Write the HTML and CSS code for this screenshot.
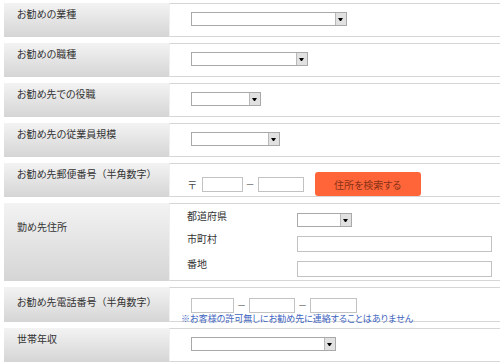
FILE: index.html
```html
<!DOCTYPE html>
<html lang="ja">
<head>
  <meta charset="UTF-8" />
  <meta name="viewport" content="width=device-width, initial-scale=1" />
  <title>お勤め先情報</title>
  <link rel="stylesheet" href="styles.css">
</head>
<body>

<form class="form">
  <div class="row">
    <div class="label">お勧めの業種</div>
    <div class="value">
      <span class="select sel-industry"><select name="industry"></select></span>
    </div>
  </div>

  <div class="row">
    <div class="label">お勧めの職種</div>
    <div class="value">
      <span class="select sel-job"><select name="job"></select></span>
    </div>
  </div>

  <div class="row">
    <div class="label">お勧め先での役職</div>
    <div class="value">
      <span class="select sel-post"><select name="post"></select></span>
    </div>
  </div>

  <div class="row">
    <div class="label">お勧め先の従業員規模</div>
    <div class="value">
      <span class="select sel-size"><select name="size"></select></span>
    </div>
  </div>

  <div class="row">
    <div class="label">お勧め先郵便番号<span class="paren">（半角数字）</span></div>
    <div class="value postal">
      <span class="mark">〒</span>
      <input type="text" class="zip1" />
      <span class="sep">－</span>
      <input type="text" class="zip2" />
      <button type="button" class="search-btn">住所を検索する</button>
    </div>
  </div>

  <div class="row address-row">
    <div class="label label-address">勤め先住所</div>
    <div class="value address">
      <span class="sub-label">都道府県</span>
      <span class="select sel-pref"><select name="pref"></select></span>
      <span class="sub-label">市町村</span>
      <input type="text" class="wide" />
      <span class="sub-label">番地</span>
      <input type="text" class="wide" />
    </div>
  </div>

  <div class="row">
    <div class="label label-tel">お勧め先電話番号<span class="paren">（半角数字）</span></div>
    <div class="value tel">
      <div class="tel-line">
        <input type="text" class="tel1" />
        <span class="sep">－</span>
        <input type="text" class="tel2" />
        <span class="sep">－</span>
        <input type="text" class="tel3" />
      </div>
      <p class="note">※お客様の許可無しにお勧め先に連絡することはありません</p>
    </div>
  </div>

  <div class="row">
    <div class="label">世帯年収</div>
    <div class="value">
      <span class="select sel-income"><select name="income"></select></span>
    </div>
  </div>
</form>

</body>
</html>
```

FILE: styles.css
```css
* { box-sizing: border-box; }
html, body { overflow: hidden; }
body {
  margin: 0;
  background: #fff;
  color: #333;
  font-family: "Noto Sans CJK JP", "Noto Sans", sans-serif;
  font-size: 10px;
  font-feature-settings: "palt";
}

.form { padding-top: 3px; }

.row {
  display: flex;
  margin-bottom: 6px;
}
.row:last-child { margin-bottom: 0; }
.address-row { margin-bottom: 6px; }

.label {
  flex: none;
  width: 165px;
  margin-left: 4px;
  padding: 5px 0 0 13px;
  line-height: 12px;
  background: linear-gradient(#f3f3f3, #d5d5d5);
  white-space: nowrap;
}
.label .paren { font-feature-settings: normal; }
.label-address { padding-top: 18px; }
.label-tel { padding-top: 9px; }

.value {
  flex: 1;
  display: flex;
  align-items: center;
  padding: 8px 0 10px 21px;
  border-top: 1px solid #d6d6d6;
  border-bottom: 1px solid #d6d6d6;
  border-left: 1px solid #f0f0f0;
}

/* select boxes */
.select {
  position: relative;
  display: inline-block;
  height: 14px;
}
.select select {
  -webkit-appearance: none;
  appearance: none;
  display: block;
  width: 100%;
  height: 14px;
  margin: 0;
  padding: 0;
  border: 1px solid #a9a9a9;
  border-radius: 0;
  background: #fff;
}
.select::after {
  content: "";
  position: absolute;
  top: 1px;
  right: 1px;
  width: 10px;
  height: 12px;
  border-left: 1px solid #b9b9b9;
  background: #e1e1e1;
  pointer-events: none;
}
.select::before {
  content: "";
  position: absolute;
  z-index: 1;
  top: 6px;
  right: 4px;
  width: 1px;
  height: 0;
  border-top: 3px solid #000;
  border-left: 2px solid transparent;
  border-right: 2px solid transparent;
  pointer-events: none;
}
.sel-industry { width: 156px; }
.sel-job { width: 117px; }
.sel-post { width: 70px; }
.sel-size { width: 89px; }
.sel-pref { width: 55px; }
.sel-income { width: 145px; }

/* text inputs */
input[type="text"] {
  height: 15px;
  margin: 0;
  padding: 0 2px;
  border: 1px solid #c2c2c2;
  background: #fff;
  font-size: 10px;
}

.sep {
  font-size: 9px;
  color: #555;
  margin: 0 3px;
}

/* postal code */
.postal { padding: 8px 0 0 18px; }
.mark { margin-right: 5px; color: #444; }
.zip1 { width: 41px; }
.zip2 { width: 46px; }
.search-btn {
  width: 106px;
  height: 24px;
  margin-left: 11px;
  border: none;
  border-radius: 3px;
  background: #ff6539;
  color: #8a3216;
  font-family: inherit;
  font-size: 10px;
  font-feature-settings: "palt";
  cursor: pointer;
}

/* address */
.address {
  display: grid;
  grid-template-columns: 110px 195px;
  row-gap: 9px;
  align-items: start;
  padding: 9px 0 3px 17px;
}
.sub-label {
  line-height: 12px;
  margin-top: -3px;
}
.address .wide {
  width: 195px;
  height: 16px;
}

/* phone */
.tel {
  display: block;
  padding: 10px 0 0 21px;
}
.tel-line {
  display: flex;
  align-items: center;
}
.tel1 { width: 43px; }
.tel2 { width: 46px; }
.tel3 { width: 47px; }
.note {
  margin: 0 0 -4px -10px;
  font-size: 9px;
  line-height: 12px;
  color: #3d64c0;
  white-space: nowrap;
}
```
